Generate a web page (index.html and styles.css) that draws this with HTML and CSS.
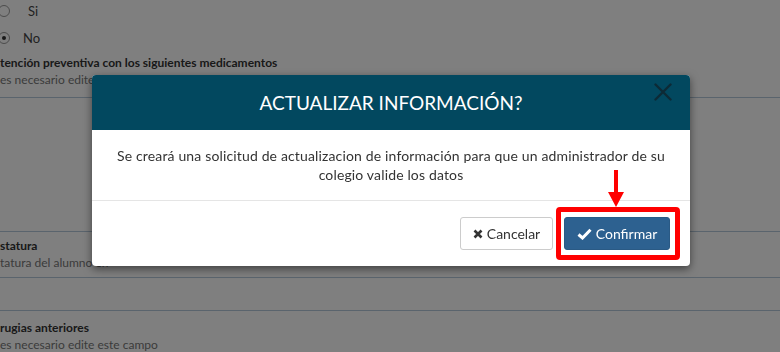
FILE: index.html
```html
<!DOCTYPE html>
<html>

<head>
    <meta charset="utf-8">
    <title>Actualizar información</title>
    <link rel="stylesheet" href="styles.css">
</head>

<body>
    <main class="page">
        <div class="option">
            <span class="radio"></span><span class="opt-si">Si</span>
        </div>
        <div class="option">
            <span class="radio checked"></span><span class="opt-no">No</span>
        </div>
        <div class="field first">
            <p class="field-title">tención preventiva con los siguientes medicamentos</p>
            <p class="field-hint">es necesario edite este campo</p>
        </div>
        <div class="field empty"></div>
        <div class="field height">
            <p class="field-title">statura</p>
            <p class="field-hint">tatura del alumno en</p>
        </div>
        <div class="field short"></div>
        <div class="field last">
            <p class="field-title">rugias anteriores</p>
            <p class="field-hint">es necesario edite este campo</p>
        </div>
    </main>

    <div class="backdrop"></div>

    <div class="modal">
        <div class="modal-header">
            <h2>ACTUALIZAR INFORMACIÓN?</h2>
            <svg class="close" width="18" height="18" viewBox="0 0 18 18">
                <path d="M1.5 1.5 L16.5 16.5 M16.5 1.5 L1.5 16.5" stroke="#0d2a36" stroke-width="2.4" stroke-linecap="round"/>
            </svg>
        </div>
        <div class="modal-body">
            <p>Se creará una solicitud de actualizacion de información para que un administrador de su colegio valide los datos</p>
        </div>
        <div class="modal-footer">
            <button class="btn btn-default">
                <svg width="10" height="10" viewBox="0 0 10 10"><path d="M1.5 1.5 L8.5 8.5 M8.5 1.5 L1.5 8.5" stroke="#333" stroke-width="2.6"/></svg>
                Cancelar
            </button>
            <button class="btn btn-primary">
                <svg width="15" height="12" viewBox="0 0 15 12"><path d="M1.5 6.5 L5.5 10 L13.5 1.8" fill="none" stroke="#fff" stroke-width="3"/></svg>
                Confirmar
            </button>
        </div>
    </div>

    <!-- marca de la captura -->
    <svg class="arrow" width="20" height="38" viewBox="0 0 20 38">
        <rect x="8" y="0" width="4" height="24" fill="#f00"/>
        <polygon points="2,22 18,22 10,37" fill="#f00"/>
    </svg>
    <div class="highlight"></div>
</body>

</html>
```

FILE: styles.css
```css
body {
    margin: 0;
    background-color: #fff;
    font-family: "Lato", "Open Sans", sans-serif;
    color: #333;
    overflow: hidden;
    height: 352px;
}

.page {
    margin-left: 0;
}

.option {
    display: flex;
    align-items: center;
    height: 27px;
    font-size: 13px;
    color: #444;
}

.option:first-child {
    margin-top: -3px;
}

.radio {
    display: inline-block;
    width: 12px;
    height: 12px;
    border: 1px solid #999;
    border-radius: 50%;
    margin-left: -2px;
    box-sizing: border-box;
    position: relative;
}

.radio.checked::after {
    content: "";
    position: absolute;
    left: 3px;
    top: 3px;
    width: 4px;
    height: 4px;
    border-radius: 50%;
    background: #333;
}

.opt-si {
    margin-left: 18px;
}

.opt-no {
    margin-left: 13px;
}

.field {
    border-bottom: 1px solid #b4c9da;
}

.field p {
    margin: 0;
}

.field.first {
    padding: 3px 0 9px;
}

.field.empty {
    height: 133px;
}

.field.height {
    padding: 5px 0 6px;
}

.field.short {
    height: 32px;
}

.field.last {
    padding-top: 8px;
    border-bottom: none;
}

.field-title {
    font-size: 12px;
    font-weight: bold;
    color: #333;
    line-height: 17px;
}

.field-hint {
    font-size: 12px;
    color: #777;
    line-height: 17px;
}

.backdrop {
    position: fixed;
    inset: 0;
    background: rgba(0, 0, 0, 0.5);
}

.modal {
    position: absolute;
    left: 92px;
    top: 75px;
    width: 598px;
    height: 191px;
    background: #fff;
    border-radius: 4px;
    overflow: hidden;
    box-shadow: 0 3px 9px rgba(0, 0, 0, 0.5);
}

.modal-header {
    height: 55px;
    background: #02485f;
    display: flex;
    align-items: center;
    justify-content: center;
    position: relative;
}

.modal-header h2 {
    margin: 0;
    font-size: 19px;
    font-weight: normal;
    color: #fff;
}

.close {
    position: absolute;
    right: 18px;
    top: 8px;
}

.modal-body {
    height: 70px;
    border-bottom: 1px solid #e5e5e5;
    display: flex;
    align-items: center;
    justify-content: center;
    padding: 0 20px;
}

.modal-body p {
    margin: 0;
    text-align: center;
    font-size: 14px;
    letter-spacing: 0.15px;
    line-height: 19px;
    color: #333;
}

.modal-footer {
    display: flex;
    justify-content: flex-end;
    gap: 11px;
    padding: 16px 20px 0;
}

.btn {
    height: 33px;
    border-radius: 3px;
    font-family: "Lato", "Open Sans", sans-serif;
    font-size: 14px;
    padding: 0 8px;
    border: 1px solid #ccc;
    display: flex;
    align-items: center;
    justify-content: center;
    gap: 4px;
}

.btn-default {
    background: #fff;
    color: #333;
    width: 93px;
}

.btn-primary {
    background: #2d6190;
    border-color: #2a5a85;
    color: #fff;
    width: 106px;
}

.arrow {
    position: absolute;
    left: 606px;
    top: 170px;
}

.highlight {
    position: absolute;
    left: 556px;
    top: 207px;
    width: 114px;
    height: 43px;
    border: 5px solid #f00;
    border-radius: 4px;
}
```
